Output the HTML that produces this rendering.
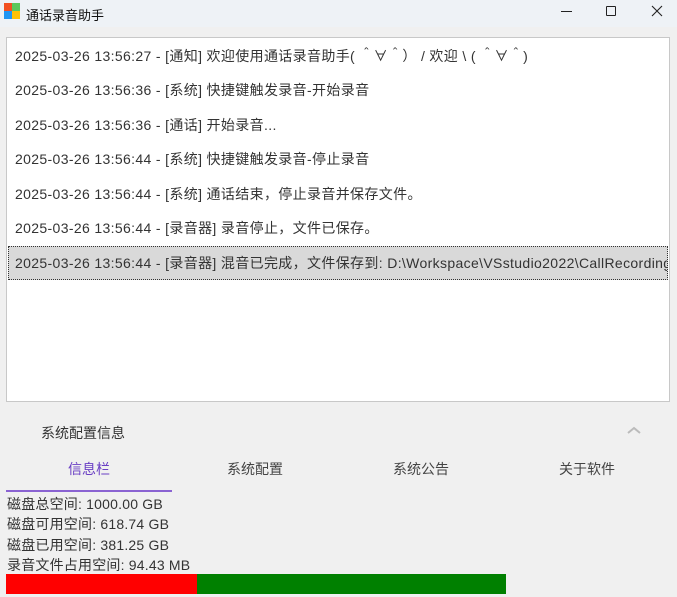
<!DOCTYPE html>
<html><head><meta charset="utf-8"><style>
*{margin:0;padding:0;box-sizing:border-box}
body{width:677px;height:597px;background:#f0f0f0;font-family:"Liberation Sans","Noto Sans CJK SC",sans-serif;position:relative;overflow:hidden;color:#333}
.tb{position:absolute;left:0;top:0;width:677px;height:27px;background:#eef2f6}
.ic{position:absolute;width:8px;height:8px}
.t{position:absolute;white-space:nowrap}
.list{position:absolute;left:6px;top:37px;width:664px;height:365px;background:#fff;border:1px solid #c8c8c8}
.row{position:absolute;left:8px;font-size:14px;letter-spacing:0.35px;white-space:nowrap;color:#333;height:20px;line-height:20px}
.sel{position:absolute;left:1px;top:208px;width:660px;height:34px;background:#d9d9d9;border:1px dotted #333;overflow:hidden}
.tab{position:absolute;top:459px;width:166px;text-align:center;font-size:14px;color:#444}
.d{position:absolute;left:7px;font-size:14px;color:#333;letter-spacing:0.2px}
</style></head><body>
<div class="tb">
<div class="ic" style="left:4px;top:3px;background:#f25022"></div>
<div class="ic" style="left:12px;top:3px;background:#5cc85c"></div>
<div class="ic" style="left:4px;top:11px;background:#2196f3"></div>
<div class="ic" style="left:12px;top:11px;background:#ffc107"></div>
<div class="t" style="left:26px;top:5px;font-size:13px;color:#111">通话录音助手</div>
<div style="position:absolute;left:561px;top:11px;width:11px;height:1px;background:#222"></div>
<div style="position:absolute;left:606px;top:6px;width:10px;height:10px;border:1px solid #222;border-radius:1px"></div>
<svg style="position:absolute;left:651px;top:5px" width="12" height="12"><path d="M1 1L11 11M11 1L1 11" stroke="#222" stroke-width="1.1"/></svg>
</div>
<div class="list">
<div class="row" style="top:8px">2025-03-26 13:56:27 - [通知] 欢迎使用通话录音助手( ＾∀＾） / 欢迎 \ ( ＾∀＾)</div>
<div class="row" style="top:42px">2025-03-26 13:56:36 - [系统] 快捷键触发录音-开始录音</div>
<div class="row" style="top:77px">2025-03-26 13:56:36 - [通话] 开始录音...</div>
<div class="row" style="top:111px">2025-03-26 13:56:44 - [系统] 快捷键触发录音-停止录音</div>
<div class="row" style="top:146px">2025-03-26 13:56:44 - [系统] 通话结束，停止录音并保存文件。</div>
<div class="row" style="top:180px">2025-03-26 13:56:44 - [录音器] 录音停止，文件已保存。</div>
<div class="sel"><div class="row" style="left:6px;top:6px">2025-03-26 13:56:44 - [录音器] 混音已完成，文件保存到: D:\Workspace\VSstudio2022\CallRecording</div></div>
</div>
<div class="t" style="left:41px;top:423px;font-size:14px;color:#333">系统配置信息</div>
<svg style="position:absolute;left:627px;top:426px" width="14" height="9"><path d="M1 7L7 2L13 7" stroke="#bbb" stroke-width="2" fill="none"/></svg>
<div class="tab" style="left:6px;color:#6a3fc4">信息栏</div>
<div class="tab" style="left:172px">系统配置</div>
<div class="tab" style="left:338px">系统公告</div>
<div class="tab" style="left:504px">关于软件</div>
<div style="position:absolute;left:6px;top:490px;width:166px;height:2px;background:#8a63d2"></div>
<div class="d" style="top:494px">磁盘总空间: 1000.00 GB</div>
<div class="d" style="top:514px">磁盘可用空间: 618.74 GB</div>
<div class="d" style="top:535px">磁盘已用空间: 381.25 GB</div>
<div class="d" style="top:555px">录音文件占用空间: 94.43 MB</div>
<div style="position:absolute;left:6px;top:574px;width:191px;height:20px;background:#f00"></div>
<div style="position:absolute;left:197px;top:574px;width:309px;height:20px;background:#008000"></div>
</body></html>
